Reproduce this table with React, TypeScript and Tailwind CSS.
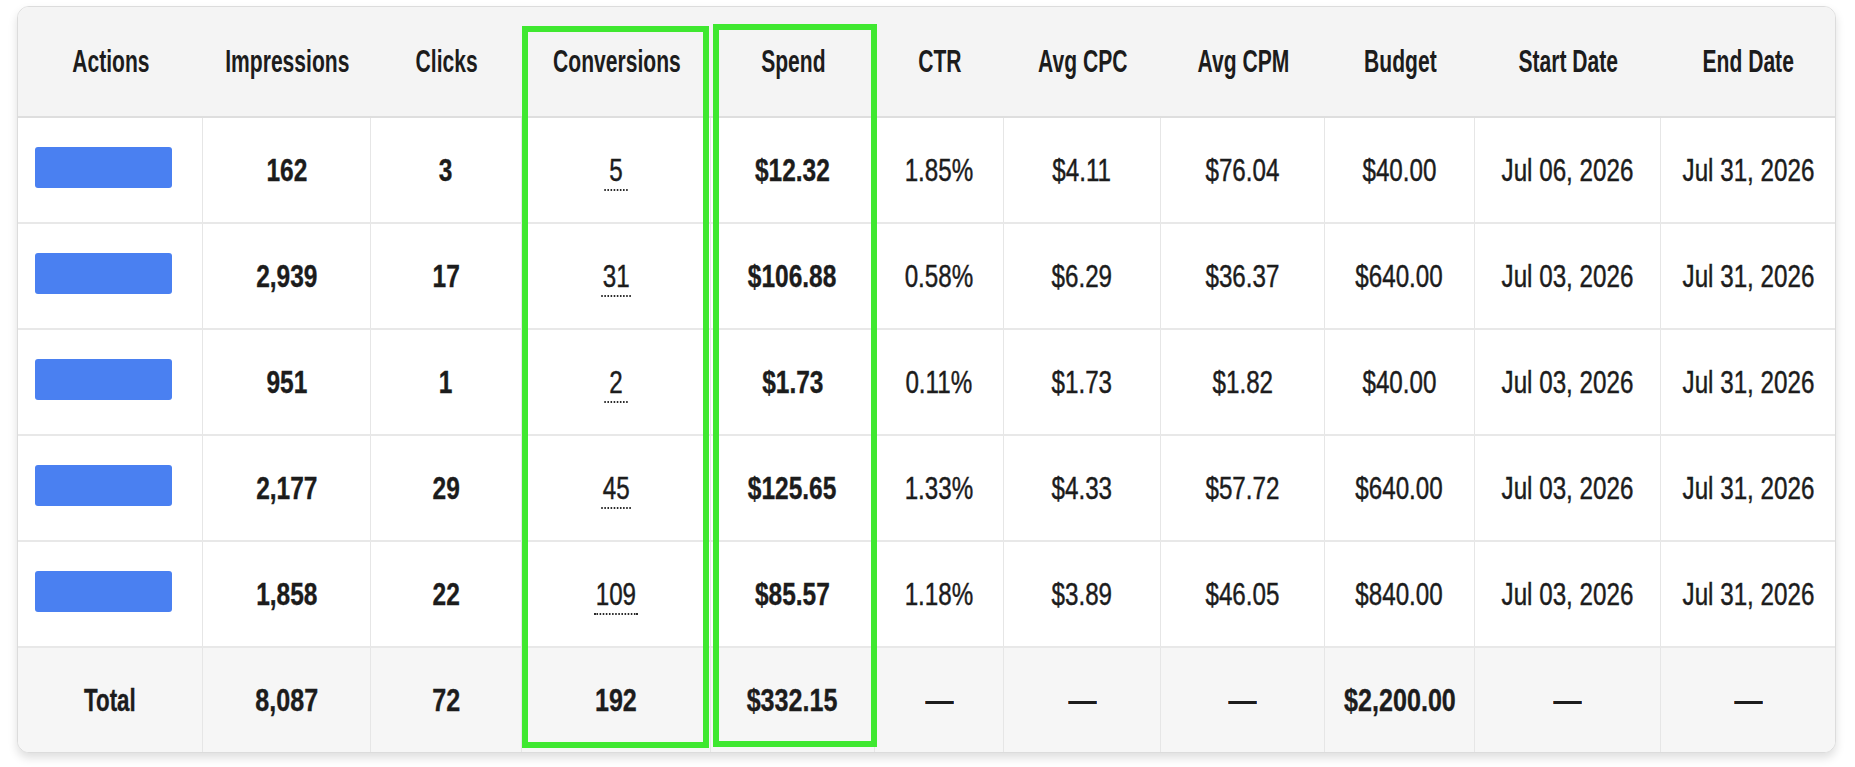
import React from 'react';
import clsx from 'clsx';

type Kind = 'actions' | 'bold' | 'conv' | 'normal';

type Column = {
  key: string;
  title: string;
  width: string;
  kind: Kind;
  highlight?: string; // overlay placement classes
  last?: boolean;
};

const columns: Column[] = [
  { key: 'actions', title: 'Actions', width: 'w-[185px]', kind: 'actions' },
  { key: 'imp', title: 'Impressions', width: 'w-[168px]', kind: 'bold' },
  { key: 'clicks', title: 'Clicks', width: 'w-[151px]', kind: 'bold' },
  {
    key: 'conv',
    title: 'Conversions',
    width: 'w-[189px]',
    kind: 'conv',
    highlight: 'left-0 right-[2px] top-[19px] bottom-[4px]',
  },
  {
    key: 'spend',
    title: 'Spend',
    width: 'w-[164px]',
    kind: 'bold',
    highlight: 'left-[2px] right-[-2px] top-[17px] bottom-[5px]',
  },
  { key: 'ctr', title: 'CTR', width: 'w-[129px]', kind: 'normal' },
  { key: 'cpc', title: 'Avg CPC', width: 'w-[157px]', kind: 'normal' },
  { key: 'cpm', title: 'Avg CPM', width: 'w-[164px]', kind: 'normal' },
  { key: 'budget', title: 'Budget', width: 'w-[150px]', kind: 'normal' },
  { key: 'start', title: 'Start Date', width: 'w-[186px]', kind: 'normal' },
  { key: 'end', title: 'End Date', width: 'w-[174px]', kind: 'normal', last: true },
];

const rows: Record<string, string>[] = [
  { imp: '162', clicks: '3', conv: '5', spend: '$12.32', ctr: '1.85%', cpc: '$4.11', cpm: '$76.04', budget: '$40.00', start: 'Jul 06, 2026', end: 'Jul 31, 2026' },
  { imp: '2,939', clicks: '17', conv: '31', spend: '$106.88', ctr: '0.58%', cpc: '$6.29', cpm: '$36.37', budget: '$640.00', start: 'Jul 03, 2026', end: 'Jul 31, 2026' },
  { imp: '951', clicks: '1', conv: '2', spend: '$1.73', ctr: '0.11%', cpc: '$1.73', cpm: '$1.82', budget: '$40.00', start: 'Jul 03, 2026', end: 'Jul 31, 2026' },
  { imp: '2,177', clicks: '29', conv: '45', spend: '$125.65', ctr: '1.33%', cpc: '$4.33', cpm: '$57.72', budget: '$640.00', start: 'Jul 03, 2026', end: 'Jul 31, 2026' },
  { imp: '1,858', clicks: '22', conv: '109', spend: '$85.57', ctr: '1.18%', cpc: '$3.89', cpm: '$46.05', budget: '$840.00', start: 'Jul 03, 2026', end: 'Jul 31, 2026' },
];

const totals: Record<string, string> = {
  actions: 'Total',
  imp: '8,087',
  clicks: '72',
  conv: '192',
  spend: '$332.15',
  ctr: '—',
  cpc: '—',
  cpm: '—',
  budget: '$2,200.00',
  start: '—',
  end: '—',
};

function BodyCell({ col, value }: { col: Column; value: string }): JSX.Element {
  return (
    <div
      className={clsx(
        'h-[106px] flex items-center border-b-2 border-b-[#e8e8e8] bg-white',
        !col.last && 'border-r border-r-[#e6e6e6]',
        col.kind === 'actions' ? 'justify-start pl-[17px]' : 'justify-center'
      )}
    >
      {col.kind === 'actions' && (
        <button className="w-[137px] h-[41px] mb-[5px] rounded-[3px] bg-[#4a80f1]" />
      )}
      {col.kind === 'bold' && (
        <span className="inline-block scale-x-[0.79] font-bold [-webkit-text-stroke:0.35px_#1c1c1c]">
          {value}
        </span>
      )}
      {col.kind === 'normal' && (
        <span className="inline-block scale-x-[0.78] [-webkit-text-stroke:0.45px_#1c1c1c]">{value}</span>
      )}
      {col.kind === 'conv' && (
        <span className="inline-block scale-x-[0.78] min-w-[30px] px-[2px] pt-[5px] pb-[3px] text-center border-b-2 border-dotted border-[#2a2a2a] [-webkit-text-stroke:0.45px_#1c1c1c]">
          {value}
        </span>
      )}
    </div>
  );
}

function TotalCell({ col, value }: { col: Column; value: string }): JSX.Element {
  const isDash = value === '—';
  return (
    <div
      className={clsx(
        'h-[104px] flex items-center justify-center bg-[#f6f6f6]',
        !col.last && 'border-r border-r-[#e6e6e6]'
      )}
    >
      {isDash ? (
        <span className="inline-block font-bold scale-x-[0.92]">—</span>
      ) : (
        <span
          className={clsx(
            'inline-block font-bold [-webkit-text-stroke:0.35px_#1c1c1c]',
            col.kind === 'actions' ? 'scale-x-[0.72]' : 'scale-x-[0.81]'
          )}
        >
          {value}
        </span>
      )}
    </div>
  );
}

function TableColumn({ col }: { col: Column }): JSX.Element {
  return (
    <div className={clsx('flex flex-col shrink-0', col.width, col.highlight && 'relative')}>
      {/* header */}
      <div className="h-[111px] flex items-center justify-center bg-[#f4f4f4] border-b-2 border-b-[#dedede]">
        <span className="inline-block scale-x-[0.68] font-bold">{col.title}</span>
      </div>
      {rows.map((row, i) => (
        <BodyCell key={i} col={col} value={row[col.key] ?? ''} />
      ))}
      <TotalCell col={col} value={totals[col.key]} />
      {col.highlight && (
        <div
          className={clsx(
            'absolute z-10 pointer-events-none border-[6px] border-[#3fe830]',
            col.highlight
          )}
        />
      )}
    </div>
  );
}

export default function App(): JSX.Element {
  return (
    <div className="min-h-screen bg-white pt-[6px] pl-[17px] font-['Liberation_Sans',Arial,sans-serif] text-[31px] leading-none text-[#1c1c1c]">
      <div className="flex w-fit rounded-[12px] border border-[#dcdcdc] overflow-hidden bg-white shadow-[0_5px_10px_rgba(0,0,0,0.13)]">
        {columns.map((col) => (
          <TableColumn key={col.key} col={col} />
        ))}
      </div>
    </div>
  );
}
